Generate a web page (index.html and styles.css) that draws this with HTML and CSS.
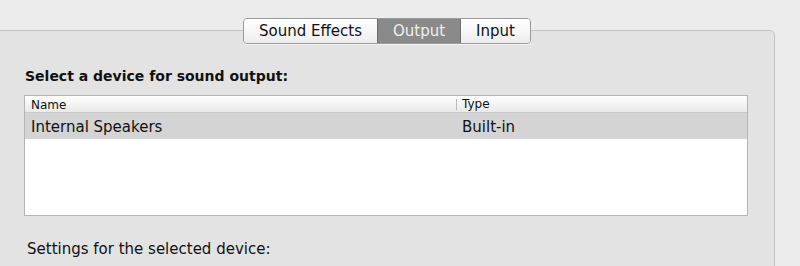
FILE: index.html
```html
<!DOCTYPE html>
<html>
<head>
<meta charset="utf-8">
<link rel="stylesheet" href="styles.css">
</head>
<body>
<div class="window">
  <div class="panel">
    <h2 class="heading">Select a device for sound output:</h2>
    <div class="table">
      <div class="thead">
        <div class="col-name">Name</div>
        <div class="col-type">Type</div>
      </div>
      <div class="row selected">
        <div class="col-name">Internal Speakers</div>
        <div class="col-type">Built-in</div>
      </div>
    </div>
    <p class="settings">Settings for the selected device:</p>
  </div>
  <div class="tabs">
    <div class="tab tab-effects">Sound Effects</div>
    <div class="tab tab-output active">Output</div>
    <div class="tab tab-input">Input</div>
  </div>
</div>
</body>
</html>
```
FILE: styles.css
```css
html, body {
  margin: 0;
  padding: 0;
}
body {
  width: 800px;
  height: 266px;
  overflow: hidden;
  background: #ececec;
  font-family: "DejaVu Sans", sans-serif;
  color: #111;
}
.window {
  position: relative;
  height: 266px;
  overflow: hidden;
}
.panel {
  position: absolute;
  left: -10px;
  top: 30px;
  width: 785px;
  height: 240px;
  box-sizing: border-box;
  background: #e3e3e3;
  border: 1px solid #c4c4c4;
  border-radius: 0 5px 0 0;
  padding: 37px 0 0 33px;
}
.heading {
  margin: 0 0 0 1px;
  font-size: 14px;
  font-weight: bold;
  line-height: 16px;
  height: 16px;
}
.table {
  margin-top: 11px;
  width: 724px;
  height: 121px;
  box-sizing: border-box;
  background: #fff;
  border: 1px solid #b5b5b5;
}
.thead, .row {
  display: flex;
}
.thead {
  height: 17px;
  box-sizing: border-box;
  background: linear-gradient(#ffffff, #f2f2f2 60%, #e9e9e9);
  border-bottom: 1px solid #c9c9c9;
  font-size: 12px;
  line-height: 16px;
}
.thead .col-name {
  width: 425px;
  padding-left: 6px;
  border-right: 1px solid #b9b9b9;
  margin: 3px 0 2px;
  line-height: 12px;
}
.thead .col-type {
  padding-left: 5px;
  line-height: 16px;
}
.row {
  height: 26px;
  box-sizing: border-box;
  padding-top: 3px;
  font-size: 15px;
  line-height: 23px;
}
.row.selected {
  background: #d4d4d4;
}
.row .col-name {
  width: 426px;
  padding-left: 6px;
}
.row .col-type {
  padding-left: 5px;
}
.settings {
  margin: 25px 0 0 3px;
  font-size: 15px;
  line-height: 16px;
}
.tabs {
  position: absolute;
  left: 243px;
  top: 18px;
  display: flex;
  height: 26px;
  box-sizing: border-box;
  border: 1px solid #9a9a9a;
  border-radius: 4px;
  overflow: hidden;
  box-shadow: 0 1px 0 rgba(255,255,255,0.6);
}
.tab {
  font-size: 15px;
  line-height: 24px;
  text-align: center;
  background: linear-gradient(#ffffff, #f7f7f7 50%, #ececec);
  border-left: 1px solid #9a9a9a;
  color: #111;
}
.tab-effects { width: 133px; border-left: none; }
.tab-output { width: 82px; }
.tab-input { width: 69px; }
.tab.active {
  background: #8a8a8a;
  color: #f0f0f0;
  border-left-color: #6f6f6f;
}
.tab.active + .tab {
  border-left-color: #6f6f6f;
}
```
